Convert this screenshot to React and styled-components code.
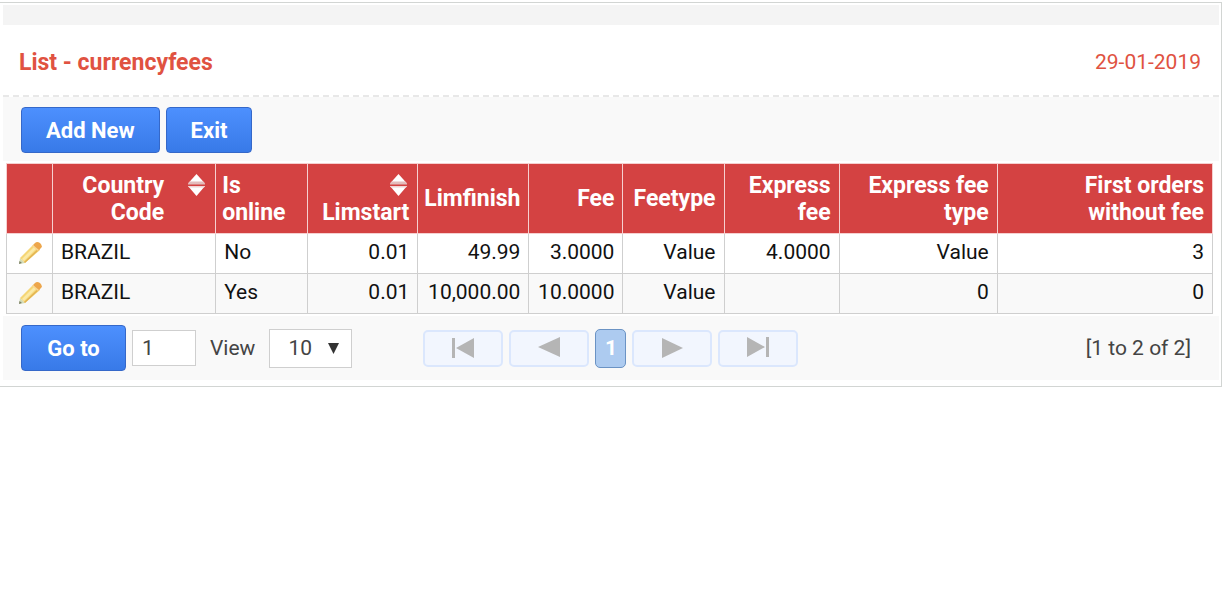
import React from "react";
import styled, { createGlobalStyle } from "styled-components";

const GlobalStyle = createGlobalStyle`
  * {
    box-sizing: border-box;
  }

  body {
    margin: 0;
    background: #fff;
    font-family: Roboto, "Liberation Sans", sans-serif;
    font-size: 21px;
    line-height: 27px;
    color: #111;
  }

  button,
  input,
  select {
    font: inherit;
  }
`;

const Card = styled.main`
  margin-top: 2px;
  padding: 2px 2px 6px 3px;
  border: 1px solid #d2d5d3;
  border-left: 0;
`;

const TopStrip = styled.div`
  height: 20px;
  background: #f4f4f4;
`;

const Header = styled.header`
  display: flex;
  align-items: center;
  justify-content: space-between;
  height: 72px;
  padding: 4px 18px 0 16px;
  border-bottom: 2px dashed #e8e8e8;
  color: #e05241;
`;

const Title = styled.h1`
  margin: 0;
  font-size: 23px;
  font-weight: 700;
`;

const Toolbar = styled.div`
  display: flex;
  gap: 6px;
  padding: 10px 18px 8px;
  background: #f9f9f9;
`;

const BlueButton = styled.button`
  height: 46px;
  padding: 0 24px;
  border: 1px solid #3568c9;
  border-radius: 4px;
  background: linear-gradient(#4d90fe, #387ae8);
  color: #fff;
  font-size: 22px;
  font-weight: 700;
  white-space: nowrap;
`;

const TableFrame = styled.div`
  padding: 2px 6px 2px 3px;
`;

const Table = styled.table`
  width: 100%;
  border-collapse: collapse;
  table-layout: fixed;
`;

const HeadCell = styled.th`
  height: 70px;
  padding: 0 8px 0 6px;
  border: 1px solid #f6d0d0;
  background: #d44242;
  color: #fff;
  font-size: 23px;
  text-align: ${(props) => props.$align || "right"};
`;

const HeadLabel = styled.div`
  display: flex;
  flex-direction: ${(props) => (props.$stacked ? "column-reverse" : "row")};
  align-items: ${(props) => (props.$stacked ? "flex-end" : "flex-start")};
  justify-content: flex-end;
  gap: ${(props) => (props.$stacked ? 0 : 22)}px;
`;

const SortButton = styled.button`
  display: flex;
  align-items: center;
  height: 27px;
  padding: 0 2px;
  border: 0;
  background: none;
`;

const Row = styled.tr`
  height: 40px;
  background: ${(props) => (props.$shaded ? "#f9f9f9" : "#fff")};
`;

const Cell = styled.td`
  padding: 0 8px 2px;
  border: 1px solid #cfcfcf;
  text-align: ${(props) => props.$align || "right"};
  white-space: nowrap;
`;

const EditLink = styled.a`
  display: flex;
  justify-content: center;
`;

const Footer = styled.footer`
  display: flex;
  align-items: center;
  height: 64px;
  padding: 0 28px 0 18px;
  background: #f9f9f9;
  color: #444;
`;

const GoButton = styled(BlueButton)`
  min-width: 105px;
`;

const PageInput = styled.input`
  width: 64px;
  height: 36px;
  margin-left: 6px;
  padding: 0 9px;
  border: 1px solid #cfcfcf;
  background: #fff;
  color: #444;
`;

const ViewLabel = styled.label`
  margin: 0 14px;
`;

const SelectBox = styled.span`
  display: grid;
  align-items: center;
  width: 83px;
`;

const Select = styled.select`
  grid-area: 1 / 1;
  width: 100%;
  height: 39px;
  padding: 0 18px;
  border: 1px solid #cfcfcf;
  border-radius: 0;
  background: #fff;
  color: #444;
  appearance: none;
`;

const SelectArrow = styled.svg`
  grid-area: 1 / 1;
  justify-self: end;
  margin-right: 13px;
  pointer-events: none;
`;

const Pager = styled.nav`
  display: flex;
  align-items: center;
  gap: 6px;
  margin-left: 71px;
`;

const PagerButton = styled.button`
  display: flex;
  align-items: center;
  justify-content: center;
  width: 80px;
  height: 37px;
  padding: 0;
  border: 2px solid #dbe7fd;
  border-radius: 5px;
  background: #f2f6fe;
`;

const CurrentPage = styled.button`
  width: 31px;
  height: 39px;
  padding: 0;
  border: 1px solid #6b93c4;
  border-radius: 5px;
  background: #adcbf0;
  color: #fff;
  font-weight: 700;
`;

const Summary = styled.span`
  margin-left: auto;
`;

const columns = [
  { key: "edit", label: "", width: 46 },
  { key: "country", label: "Country Code", width: 163, align: "left", sort: "side" },
  { key: "online", label: "Is online", width: 92, align: "left" },
  { key: "start", label: "Limstart", width: 110, sort: "stacked" },
  { key: "finish", label: "Limfinish", width: 111 },
  { key: "fee", label: "Fee", width: 94 },
  { key: "type", label: "Feetype", width: 101 },
  { key: "express", label: "Express fee", width: 115 },
  { key: "expressType", label: "Express fee type", width: 158 },
  { key: "first", label: "First orders without fee", width: 215 },
];

const totalWidth = columns.reduce((sum, column) => sum + column.width, 0);

const rows = [
  {
    id: 1,
    country: "BRAZIL",
    online: "No",
    start: "0.01",
    finish: "49.99",
    fee: "3.0000",
    type: "Value",
    express: "4.0000",
    expressType: "Value",
    first: "3",
  },
  {
    id: 2,
    country: "BRAZIL",
    online: "Yes",
    start: "0.01",
    finish: "10,000.00",
    fee: "10.0000",
    type: "Value",
    express: "",
    expressType: "0",
    first: "0",
  },
];

const pagerPaths = {
  First: "M0 1h3v20H0zM22 1v20L4 11z",
  Previous: "M22 0v20L0 10z",
  Next: "M1 1v20L22 11z",
  Last: "M0 0v20L18 10zM19 0h3v20h-3z",
};

function SortIcon() {
  return (
    <svg width="17" height="22" viewBox="0 0 17 22" aria-hidden="true">
      <path d="M8.500 0 17 9.500H0z" fill="#fff" />
      <path d="M0 9.500 2 7.500h13l2 2v1H0z" fill="#e3bcbc" />
      <path d="M0 12h17L8.500 22z" fill="#fff" />
      <path d="M0 12h17l-1 1.500H1z" fill="#f0d4d4" />
    </svg>
  );
}

function PencilIcon() {
  return (
    <svg width="24" height="24" viewBox="0 0 24 24" aria-hidden="true">
      <path d="M1 23 2 17l5 5z" fill="#d3dcb8" />
      <path d="m1 23 .5-3 2.500 2z" fill="#7c8067" />
      <path d="M2 17 15 4l7 5L7 22z" fill="#f5d676" />
      <path d="M4 18 17 5l2 2L6 20z" fill="#fbe9a6" />
      <path d="M7 22 22 8l-1-1L6 21z" fill="#e2b352" />
      <path d="m15 4 2-2q2-2 5 0 3 3 1 5l-3 3z" fill="#eda64b" />
      <path d="m14 5 1-1 6 5-1 1z" fill="#f8d694" />
    </svg>
  );
}

function PagerItem({ name }) {
  return (
    <PagerButton type="button" aria-label={name}>
      <svg width="22" height="22" viewBox="0 0 22 22" aria-hidden="true">
        <path d={pagerPaths[name]} fill="#b5b5b5" />
      </svg>
    </PagerButton>
  );
}

function ColumnHead({ column }) {
  if (!column.sort) {
    return <HeadCell $align={column.align}>{column.label}</HeadCell>;
  }
  return (
    <HeadCell>
      <HeadLabel $stacked={column.sort === "stacked"}>
        <span>{column.label}</span>
        <SortButton type="button" aria-label={`Sort by ${column.label}`}>
          <SortIcon />
        </SortButton>
      </HeadLabel>
    </HeadCell>
  );
}

export default function App() {
  return (
    <>
      <GlobalStyle />
      <Card>
        <TopStrip />
        <Header>
          <Title>List - currencyfees</Title>
          <time dateTime="2019-01-29">29-01-2019</time>
        </Header>
        <Toolbar>
          <BlueButton type="button">Add New</BlueButton>
          <BlueButton type="button">Exit</BlueButton>
        </Toolbar>
        <TableFrame>
          <Table>
            <colgroup>
              {columns.map((column) => (
                <col
                  key={column.key}
                  style={{ width: `${(column.width / totalWidth) * 100}%` }}
                />
              ))}
            </colgroup>
            <thead>
              <tr>
                {columns.map((column) => (
                  <ColumnHead key={column.key} column={column} />
                ))}
              </tr>
            </thead>
            <tbody>
              {rows.map((row, index) => (
                <Row key={row.id} $shaded={index % 2 === 1}>
                  <Cell>
                    <EditLink href="#edit" aria-label="Edit">
                      <PencilIcon />
                    </EditLink>
                  </Cell>
                  {columns.slice(1).map((column) => (
                    <Cell key={column.key} $align={column.align}>
                      {row[column.key]}
                    </Cell>
                  ))}
                </Row>
              ))}
            </tbody>
          </Table>
        </TableFrame>
        <Footer>
          <GoButton type="button">Go to</GoButton>
          <PageInput type="text" defaultValue="1" aria-label="Page" />
          <ViewLabel htmlFor="view">View</ViewLabel>
          <SelectBox>
            <Select id="view" defaultValue="10">
              <option>10</option>
              <option>20</option>
              <option>50</option>
            </Select>
            <SelectArrow width="11" height="11" viewBox="0 0 11 11">
              <path d="M0 0h11L5.500 11z" fill="#333" />
            </SelectArrow>
          </SelectBox>
          <Pager aria-label="Pages">
            <PagerItem name="First" />
            <PagerItem name="Previous" />
            <CurrentPage type="button">1</CurrentPage>
            <PagerItem name="Next" />
            <PagerItem name="Last" />
          </Pager>
          <Summary>[1 to 2 of 2]</Summary>
        </Footer>
      </Card>
    </>
  );
}
